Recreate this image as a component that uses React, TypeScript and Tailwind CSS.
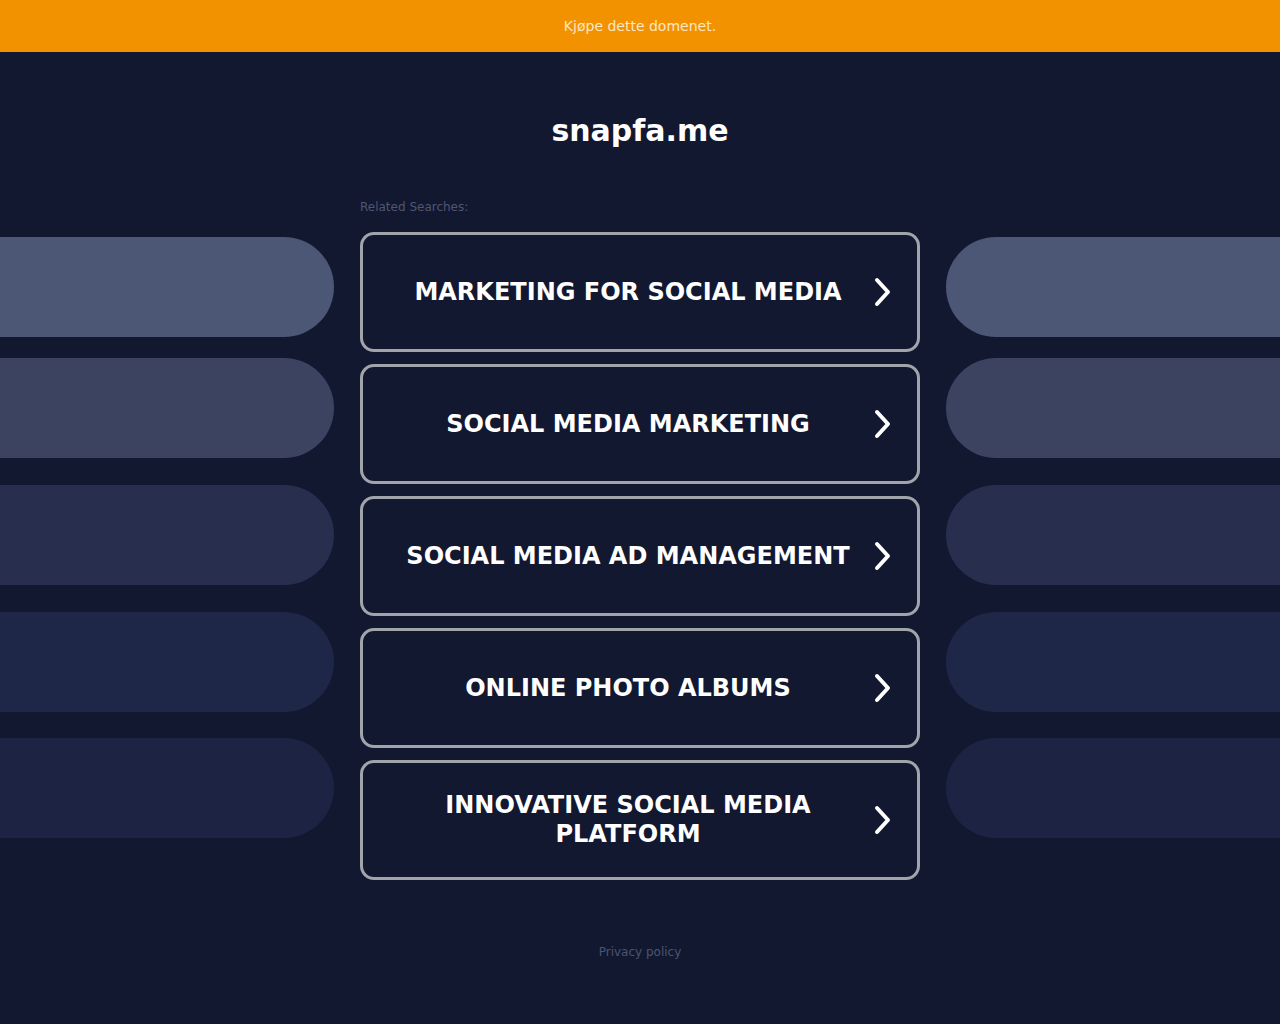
import React from 'react';

const searches = [
  'MARKETING FOR SOCIAL MEDIA',
  'SOCIAL MEDIA MARKETING',
  'SOCIAL MEDIA AD MANAGEMENT',
  'ONLINE PHOTO ALBUMS',
  'INNOVATIVE SOCIAL MEDIA PLATFORM',
];

const pills = [
  { color: 'bg-[#4c5675]', mt: 'mt-[5px]' },
  { color: 'bg-[#3b4361]', mt: 'mt-[21px]' },
  { color: 'bg-[#282f4e]', mt: 'mt-[27px]' },
  { color: 'bg-[#1f2748]', mt: 'mt-[27px]' },
  { color: 'bg-[#1c2343]', mt: 'mt-[26px]' },
];

const Chevron = () => (
  <svg width="18" height="30" viewBox="0 0 18 30" fill="none" className="shrink-0">
    <polyline
      points="3,3 14,15 3,27"
      stroke="white"
      strokeWidth="4"
      strokeLinecap="round"
      strokeLinejoin="round"
    />
  </svg>
);

export default function App() {
  return (
    <div className="min-h-[1024px] bg-[#121830] font-['DejaVu_Sans',sans-serif]">
      <div className="h-[52px] bg-[#f39200] flex items-center justify-center">
        <a className="text-[14px] text-[#fde7c0]">Kjøpe dette domenet.</a>
      </div>

      <h1 className="mt-[59px] text-center text-[30px] leading-[40px] font-bold text-white">snapfa.me</h1>

      <div className="grid grid-cols-[334px_560px_334px] gap-x-[26px] mt-[48px]">
        <div />
        <p className="text-[12px] leading-[16px] text-[#4f5672] mb-[17px]">Related Searches:</p>
        <div />

        <div className="flex flex-col">
          {pills.map((p, i) => (
            <div key={i} className={`h-[100px] rounded-r-[50px] ${p.color} ${p.mt}`} />
          ))}
        </div>

        <div className="flex flex-col gap-[12px]">
          {searches.map((s) => (
            <a
              key={s}
              className="h-[120px] rounded-[14px] border-[3px] border-[#a1a5ab] flex items-center pl-[19px] pr-[25px]"
            >
              <span className="flex-1 text-center text-white font-bold text-[24px] leading-[29px] px-[6px]">
                {s}
              </span>
              <Chevron />
            </a>
          ))}
        </div>

        <div className="flex flex-col">
          {pills.map((p, i) => (
            <div key={i} className={`h-[100px] rounded-l-[50px] ${p.color} ${p.mt}`} />
          ))}
        </div>
      </div>

      <p className="mt-[63px] text-center text-[12px] text-[#4b5470]">Privacy policy</p>
    </div>
  );
}
